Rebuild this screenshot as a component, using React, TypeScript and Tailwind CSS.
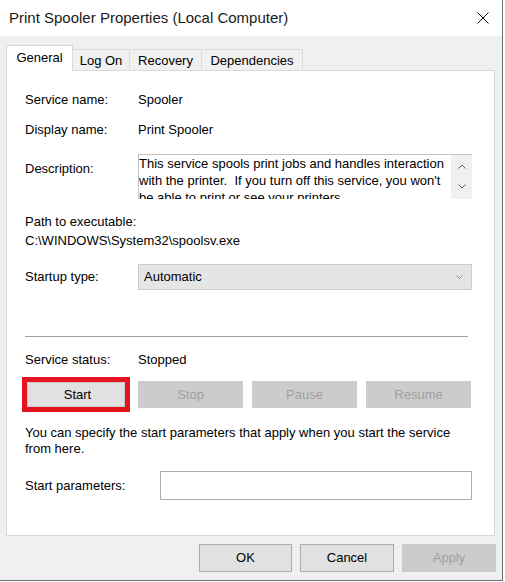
import React from "react";

function Chevron({ up }: { up?: boolean }) {
  return (
    <svg width="8" height="5" viewBox="0 0 8 5" className="block">
      {up ? (
        <path d="M0.5 4.5 L4 1 L7.5 4.5" fill="none" stroke="#606060" strokeWidth="1" />
      ) : (
        <path d="M0.5 0.5 L4 4 L7.5 0.5" fill="none" stroke="#606060" strokeWidth="1" />
      )}
    </svg>
  );
}

export default function App() {
  return (
    <div className="w-[505px] h-[582px] bg-white font-['Liberation_Sans',Arial,sans-serif] text-[13px] text-black">
      <div className="w-[503px] h-[581px] border-r border-b border-[#6f6f6f] flex flex-col">
        {/* Title bar */}
        <div className="h-[36px] bg-white flex items-center justify-between pl-[9px] shrink-0">
          <span className="text-[15px] text-[#1a1a1a] leading-[18px]">Print Spooler Properties (Local Computer)</span>
          <svg width="12" height="12" viewBox="0 0 12 12" className="mr-[13px]">
            <path d="M0.5 0.5 L11.5 11.5 M11.5 0.5 L0.5 11.5" stroke="#111" strokeWidth="1" />
          </svg>
        </div>

        {/* Body */}
        <div className="flex-1 bg-[#f0f0f0] pl-[6px] pt-[9px] flex flex-col">
          {/* Tabs */}
          <div className="flex items-end h-[26px] relative z-10">
            <div className="w-[67px] h-[26px] bg-white border border-b-0 border-[#d9d9d9] flex items-start justify-center pt-[4px] leading-[16px]">
              General
            </div>
            <div className="w-[57px] h-[22px] border border-b-0 border-l-0 border-[#d9d9d9] flex items-center justify-center leading-[16px]">
              Log On
            </div>
            <div className="w-[72px] h-[22px] border border-b-0 border-l-0 border-[#d9d9d9] flex items-center justify-center leading-[16px]">
              Recovery
            </div>
            <div className="w-[101px] h-[22px] border border-b-0 border-l-0 border-[#d9d9d9] flex items-center justify-center leading-[16px]">
              Dependencies
            </div>
          </div>

          {/* Panel */}
          <div className="w-[489px] h-[466px] -mt-px bg-white border border-[#d9d9d9] pl-[18px] flex flex-col leading-[16px]">
            <div className="flex mt-[21px] h-[16px]">
              <div className="w-[113px]">Service name:</div>
              <div>Spooler</div>
            </div>
            <div className="flex mt-[14px] h-[16px]">
              <div className="w-[113px]">Display name:</div>
              <div>Print Spooler</div>
            </div>
            <div className="flex mt-[16px] h-[45px]">
              <div className="w-[113px] pt-[7px]">Description:</div>
              <div className="w-[334px] h-[45px] border-t border-l border-[#c4c4c4] flex overflow-hidden">
                <div className="flex-1 pl-[0px] leading-[17px] overflow-hidden">
                  This service spools print jobs and handles interaction
                  <br />
                  with the printer.&nbsp; If you turn off this service, you won't
                  <br />
                  be able to print or see your printers.
                </div>
                <div className="w-[21px] bg-[#f0f0f0] flex flex-col items-center pt-[9px] gap-[15px]">
                  <Chevron up />
                  <Chevron />
                </div>
              </div>
            </div>
            <div className="mt-[15px] h-[16px]">Path to executable:</div>
            <div className="mt-[3px] h-[16px]">C:\WINDOWS\System32\spoolsv.exe</div>
            <div className="flex items-center mt-[15px] h-[26px]">
              <div className="w-[113px]">Startup type:</div>
              <div className="w-[334px] h-[26px] bg-[#e5e5e5] border border-[#cccccc] flex items-center justify-between pl-[5px] pr-[8px]">
                <span>Automatic</span>
                <svg width="7" height="4" viewBox="0 0 7 4">
                  <path d="M0.5 0.5 L3.5 3.5 L6.5 0.5" fill="none" stroke="#8a8a8a" strokeWidth="1" />
                </svg>
              </div>
            </div>
            <div className="mt-[46px] h-px w-[443px] bg-[#a0a0a0]" />
            <div className="flex mt-[15px] h-[16px]">
              <div className="w-[113px]">Service status:</div>
              <div>Stopped</div>
            </div>
            <div className="flex items-center mt-[9px] -ml-[3px] h-[35px]">
              <div className="w-[108px] h-[35px] border-[5px] border-[#e3131f] flex">
                <div className="flex-1 bg-[#e1e1e1] border border-[#c9c9c9] flex items-center justify-center pl-[3px]">
                  Start
                </div>
              </div>
              <div className="ml-[8px] w-[105px] h-[27px] bg-[#cccccc] text-[#a0a0a0] flex items-center justify-center">
                Stop
              </div>
              <div className="ml-[9px] w-[105px] h-[27px] bg-[#cccccc] text-[#a0a0a0] flex items-center justify-center">
                Pause
              </div>
              <div className="ml-[9px] w-[105px] h-[27px] bg-[#cccccc] text-[#a0a0a0] flex items-center justify-center">
                Resume
              </div>
            </div>
            <div className="mt-[13px]">
              You can specify the start parameters that apply when you start the service
              <br />
              from here.
            </div>
            <div className="flex items-center mt-[14px] h-[29px]">
              <div className="w-[135px]">Start parameters:</div>
              <div className="w-[312px] h-[29px] bg-white border border-[#ababab]" />
            </div>
          </div>

          {/* Bottom buttons */}
          <div className="flex justify-end gap-[8px] pr-[6px] mt-[8px]">
            <div className="w-[93px] h-[28px] bg-[#e1e1e1] border border-[#adadad] flex items-center justify-center">
              OK
            </div>
            <div className="w-[94px] h-[28px] bg-[#e1e1e1] border border-[#adadad] flex items-center justify-center">
              Cancel
            </div>
            <div className="w-[94px] h-[28px] bg-[#cccccc] text-[#a0a0a0] flex items-center justify-center">
              Apply
            </div>
          </div>
        </div>
      </div>
    </div>
  );
}
